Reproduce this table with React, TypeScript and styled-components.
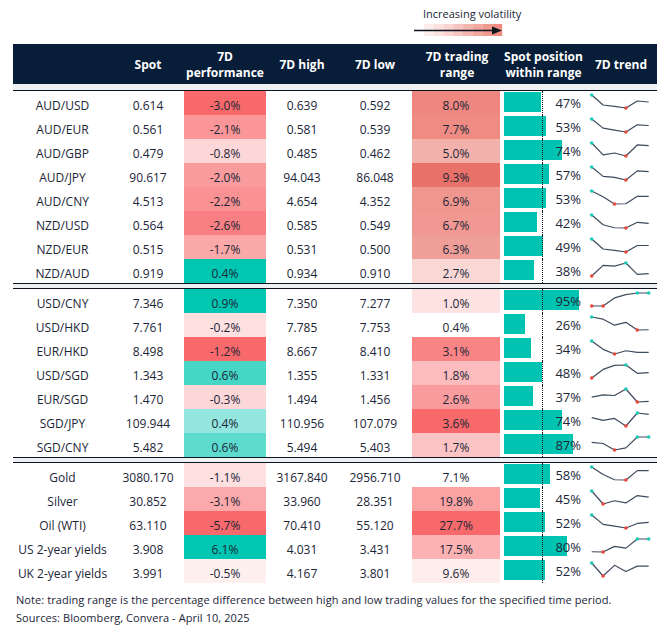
import React from "react";
import styled, { createGlobalStyle } from "styled-components";

const GlobalStyle = createGlobalStyle`
  html, body { margin: 0; padding: 0; background: #ffffff; }
  body { font-family: "Open Sans", "Noto Sans", sans-serif; color: #1b2637; }
`;

const COLS = "99px 72px 82px 72px 74px 90px 83px 72px";
const TEAL = "#00c6b2";
const BAR_W = 79;

type RowData = {
  name: string;
  spot: string;
  perf: string;
  perfBg: string;
  high: string;
  low: string;
  range: string;
  rangeBg: string;
  pos: number;
  trend: number[];
};

const r = (
  name: string,
  spot: string,
  perf: string,
  perfBg: string,
  high: string,
  low: string,
  range: string,
  rangeBg: string,
  pos: number,
  trend: number[]
): RowData => ({ name, spot, perf, perfBg, high, low, range, rangeBg, pos, trend });

const groups: RowData[][] = [
  [
    r("AUD/USD", "0.614", "-3.0%", "#f8696b", "0.639", "0.592", "8.0%", "#ee877f", 47, [1, 0.23, 0.12, 0, 0.54, 0.46]),
    r("AUD/EUR", "0.561", "-2.1%", "#fa9698", "0.581", "0.539", "7.7%", "#ee8c84", 53, [1, 0.3, 0.15, 0, 0.55, 0.5]),
    r("AUD/GBP", "0.479", "-0.8%", "#fdd7d8", "0.485", "0.462", "5.0%", "#f3b1ac", 74, [1, 0.08, 0.23, 0, 0.85, 0.8]),
    r("AUD/JPY", "90.617", "-2.0%", "#fa9b9d", "94.043", "86.048", "9.3%", "#e8726a", 57, [1, 0.28, 0.2, 0, 0.7, 0.65]),
    r("AUD/CNY", "4.513", "-2.2%", "#fa9193", "4.654", "4.352", "6.9%", "#ef968f", 53, [1, 0.56, 0, 0.02, 0.59, 0.59]),
    r("NZD/USD", "0.564", "-2.6%", "#f98082", "0.585", "0.549", "6.7%", "#f09891", 42, [1, 0.25, 0.02, 0, 0.44, 0.36]),
    r("NZD/EUR", "0.515", "-1.7%", "#fba8a9", "0.531", "0.500", "6.3%", "#f09e98", 49, [1, 0.23, 0.13, 0, 0.5, 0.5]),
    r("NZD/AUD", "0.919", "0.4%", TEAL, "0.934", "0.910", "2.7%", "#f8d7d5", 38, [0, 0.82, 0.76, 1, 0.13, 0.19]),
  ],
  [
    r("USD/CNY", "7.346", "0.9%", TEAL, "7.350", "7.277", "1.0%", "#fee1e1", 95, [0, 0, 0.62, 0.87, 1, 1]),
    r("USD/HKD", "7.761", "-0.2%", "#ffe0e1", "7.785", "7.753", "0.4%", "transparent", 26, [1, 0.83, 0.37, 0.59, 0, 0.02]),
    r("EUR/HKD", "8.498", "-1.2%", "#f8696b", "8.667", "8.410", "3.1%", "#f98486", 34, [1, 0.36, 0, 0.25, 0.13, 0.13]),
    r("USD/SGD", "1.343", "0.6%", "#45d6c6", "1.355", "1.331", "1.8%", "#fcbcbd", 48, [0, 0.66, 0.97, 1, 0.36, 0.42]),
    r("EUR/SGD", "1.470", "-0.3%", "#fdd6d7", "1.494", "1.456", "2.6%", "#fa9c9e", 37, [0.37, 0.55, 0.5, 1, 0, 0.05]),
    r("SGD/JPY", "109.944", "0.4%", "#93e7de", "110.956", "107.079", "3.6%", "#f8696b", 74, [0.65, 0.43, 0.58, 0, 1, 0.9]),
    r("SGD/CNY", "5.482", "0.6%", "#5ddbcd", "5.494", "5.403", "1.7%", "#fcc3c4", 87, [0.58, 0.5, 0, 0.16, 1, 1]),
  ],
  [
    r("Gold", "3080.170", "-1.1%", "#fee0e1", "3167.840", "2956.710", "7.1%", "transparent", 58, [1, 0.42, 0.02, 0, 0.72, 0.72]),
    r("Silver", "30.852", "-3.1%", "#fba9aa", "33.960", "28.351", "19.8%", "#fba2a3", 45, [1, 0, 0.25, 0.08, 0.65, 0.53]),
    r("Oil (WTI)", "63.110", "-5.7%", "#f8696b", "70.410", "55.120", "27.7%", "#f8696b", 52, [1, 0.28, 0.15, 0, 0.35, 0.43]),
    r("US 2-year yields", "3.908", "6.1%", TEAL, "4.031", "3.431", "17.5%", "#fcb1b2", 80, [0.02, 0, 0.43, 0.3, 1, 1]),
    r("UK 2-year yields", "3.991", "-0.5%", "#fff0f0", "4.167", "3.801", "9.6%", "#feeded", 52, [1, 0, 0.82, 0.35, 0.76, 0.76]),
  ],
];

const Page = styled.div`
  width: 644px;
  padding: 0 6px 0 13px;
`;

const LegendArea = styled.div`
  height: 44px;
  display: flex;
  flex-direction: column;
  align-items: flex-start;
  padding-left: 401px;
  box-sizing: border-box;
`;

const LegendLabel = styled.div`
  font-size: 11px;
  line-height: 15px;
  margin-top: 6px;
  margin-left: 9px;
  color: #1b2637;
`;

const LegendArrow = styled.svg`
  display: block;
  margin-top: 3px;
`;

const HeaderBar = styled.div`
  display: grid;
  grid-template-columns: ${COLS};
  height: 40px;
  background: #081e38;
  color: #ffffff;
`;

const HeadCell = styled.div`
  display: flex;
  align-items: center;
  justify-content: center;
  text-align: center;
  font-weight: 700;
  font-size: 12px;
  line-height: 16px;
  padding-top: 1px;
`;

const Gap = styled.div<{ $top?: boolean }>`
  height: ${(p) => (p.$top ? "6px" : "4px")};
  background: #eef1f3;
  border-top: ${(p) => (p.$top ? "none" : "1.5px solid #0d1420")};
  border-bottom: 1.5px solid #0d1420;
`;

const Group = styled.div`
  display: flex;
  flex-direction: column;
`;

const Row = styled.div`
  display: grid;
  grid-template-columns: ${COLS};
  height: 24px;
  font-size: 12px;
`;

const Cell = styled.div<{ $bg?: string; $inset?: boolean }>`
  display: flex;
  align-items: center;
  justify-content: center;
  padding-top: 4px;
  box-sizing: border-box;
  background: ${(p) => p.$bg || "transparent"};
  margin-right: ${(p) => (p.$inset ? "2px" : "0")};
  white-space: nowrap;
`;

const PosCell = styled.div`
  position: relative;
  display: grid;
  padding: 1px 4px 3px 2px;
  box-sizing: border-box;
  &::after {
    content: "";
    position: absolute;
    left: 40px;
    top: 0;
    bottom: 0;
    border-left: 1px dotted #0d1420;
  }
`;

const Bar = styled.div`
  grid-area: 1 / 1;
  align-self: stretch;
  justify-self: start;
  background: #00c4b1;
`;

const PosText = styled.div`
  grid-area: 1 / 1;
  justify-self: end;
  align-self: center;
  font-size: 13px;
  margin-top: 2px;
  position: relative;
  z-index: 1;
`;

const TrendCell = styled.div`
  display: flex;
  align-items: stretch;
`;

const Footer = styled.div`
  padding: 8px 0 0 3px;
  font-size: 11px;
  line-height: 18px;
  letter-spacing: 0.07px;
  color: #1b2637;
  white-space: nowrap;
`;

function Sparkline({ values }: { values: number[] }) {
  const xs = values.map((_, i) => 6.7 + i * 11.4);
  const ys = values.map((v) => 17 - v * 13);
  const pts = xs.map((x, i) => `${x},${ys[i]}`).join(" ");
  return (
    <svg width="72" height="24" viewBox="0 0 72 24">
      <polyline points={pts} fill="none" stroke="#3e4b5c" strokeWidth="1.2" strokeLinejoin="round" />
      {values.map((v, i) =>
        v === 1 || v === 0 ? (
          <circle key={i} cx={xs[i]} cy={ys[i]} r="1.8" fill={v === 1 ? "#1ccbb8" : "#e8473a"} />
        ) : null
      )}
    </svg>
  );
}

function Legend() {
  const steps = ["#fdeeed", "#fbe2df", "#f9d4d0", "#f7c5c0", "#f5b6b0", "#f3a79f", "#f1988f", "#ef8a80"];
  return (
    <LegendArea>
      <LegendLabel>Increasing volatility</LegendLabel>
      <LegendArrow width="92" height="13" viewBox="0 0 92 13">
        {steps.map((c, i) => (
          <rect key={i} x={10 + i * 9.75} y="0" width="9.9" height="12" fill={c} />
        ))}
        <line x1="0" y1="6.5" x2="80" y2="6.5" stroke="#0d1420" strokeWidth="1.4" />
        <polygon points="78,2.5 88,6.5 78,10.5" fill="#0d1420" />
      </LegendArrow>
    </LegendArea>
  );
}

function DataRow({ d }: { d: RowData }) {
  return (
    <Row>
      <Cell>{d.name}</Cell>
      <Cell>{d.spot}</Cell>
      <Cell $bg={d.perfBg}>{d.perf}</Cell>
      <Cell>{d.high}</Cell>
      <Cell>{d.low}</Cell>
      <Cell $bg={d.rangeBg} $inset>{d.range}</Cell>
      <PosCell>
        <Bar style={{ width: `${(d.pos / 100) * BAR_W}px` }} />
        <PosText>{d.pos}%</PosText>
      </PosCell>
      <TrendCell>
        <Sparkline values={d.trend} />
      </TrendCell>
    </Row>
  );
}

export default function App() {
  return (
    <>
      <GlobalStyle />
      <Page>
        <Legend />
        <HeaderBar>
          <HeadCell />
          <HeadCell>Spot</HeadCell>
          <HeadCell>
            7D
            <br />
            performance
          </HeadCell>
          <HeadCell>7D high</HeadCell>
          <HeadCell>7D low</HeadCell>
          <HeadCell>
            7D trading
            <br />
            range
          </HeadCell>
          <HeadCell>
            Spot position
            <br />
            within range
          </HeadCell>
          <HeadCell>7D trend</HeadCell>
        </HeaderBar>
        <Gap $top />
        {groups.map((g, gi) => (
          <React.Fragment key={gi}>
            {gi > 0 && <Gap />}
            <Group>
              {g.map((d) => (
                <DataRow key={d.name} d={d} />
              ))}
            </Group>
          </React.Fragment>
        ))}
        <Footer>
          Note: trading range is the percentage difference between high and low trading values for the specified time period.
          <br />
          Sources: Bloomberg, Convera - April 10, 2025
        </Footer>
      </Page>
    </>
  );
}
